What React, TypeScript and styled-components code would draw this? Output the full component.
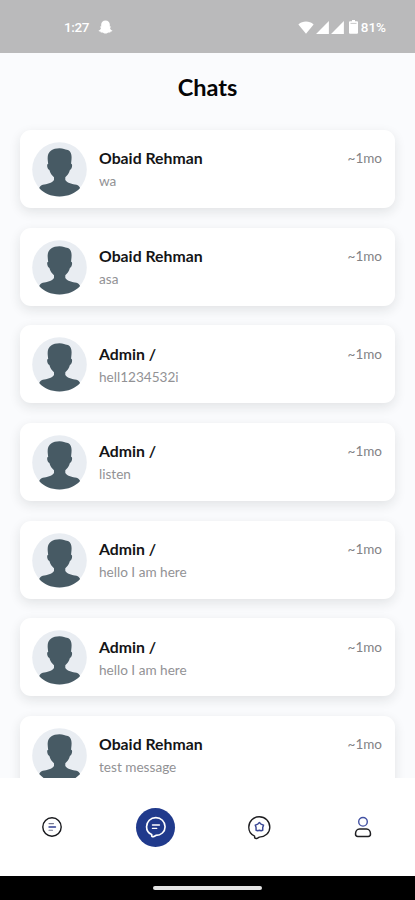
import React from "react";
import styled, { createGlobalStyle } from "styled-components";

const GlobalStyle = createGlobalStyle`
  * { box-sizing: border-box; }
  body { margin: 0; background: #fafbfd; font-family: Lato, "Open Sans", sans-serif; }
`;

const Screen = styled.div`
  width: 415px;
  height: 900px;
  display: flex;
  flex-direction: column;
  overflow: hidden;
  background: #fafbfd;
`;

const StatusBar = styled.header`
  flex: none;
  height: 53px;
  padding: 1px 29px 0 64px;
  display: flex;
  align-items: center;
  justify-content: space-between;
  background: #bababb;
  color: #fff;
  font: 500 13.5px/16px Roboto, sans-serif;
`;

const StatusGroup = styled.div<{ $gap: number }>`
  display: flex;
  align-items: center;
  gap: ${({ $gap }) => $gap}px;
  svg { display: block; }
`;

const Clock = styled.span`
  letter-spacing: -0.4px;
`;

const Title = styled.h1`
  flex: none;
  height: 77px;
  margin: 0;
  padding-top: 19.5px;
  text-align: center;
  font-size: 23.5px;
  line-height: 28px;
  font-weight: 700;
  color: #050506;
`;

const ChatList = styled.main`
  flex: 1;
  min-height: 0;
  display: flex;
  flex-direction: column;
  gap: 19.67px;
  padding: 20px 20px 0;
  margin-top: -20px;
  overflow: hidden;
`;

const ChatCard = styled.article`
  flex: none;
  height: 78px;
  display: flex;
  align-items: flex-start;
  padding: 12px 13px 0 12px;
  border-radius: 11px;
  background: #fff;
  box-shadow: 0 4px 12px rgba(30, 35, 40, 0.11);
`;

const ChatText = styled.div`
  flex: 1;
  padding: 6.45px 0 0 12px;
`;

const Name = styled.div`
  font-size: 15.8px;
  line-height: 20px;
  font-weight: 700;
  color: #141416;
`;

const Message = styled.div`
  margin-top: 4px;
  font-size: 13.6px;
  line-height: 18px;
  color: #929295;
`;

const Age = styled.time`
  padding-top: 7.45px;
  font-size: 13.5px;
  line-height: 18px;
  color: #838386;
`;

const TabBar = styled.nav`
  flex: none;
  height: 98px;
  display: grid;
  grid-template-columns: repeat(4, 1fr);
  justify-items: center;
  align-items: center;
  background: #fff;
  svg { display: block; }
`;

const Tab = styled.button<{ $active?: boolean }>`
  width: 39px;
  height: 39px;
  padding: 0;
  border: 0;
  border-radius: 50%;
  display: grid;
  place-items: center;
  background: ${({ $active }) => ($active ? "#203a8c" : "transparent")};
`;

const SystemBar = styled.footer`
  flex: none;
  height: 24px;
  display: flex;
  justify-content: center;
  align-items: center;
  background: #000;
`;

const HomeHandle = styled.div`
  width: 109px;
  height: 4px;
  border-radius: 2px;
  background: #e4e4e4;
`;

const Ghost = () => (
  <svg width="15" height="14" viewBox="0 0 15 14" fill="#fff">
    <path d="M7.500.4c2.700 0 4.300 1.700 4.300 4v2.100l1 .1c.4.4-.2 1-.8 1.300.5 1.400 1.200 2.100 2.300 2.500.3.6-.7 1-1.700 1.200l-.4.9-1.600-.1c-1.100.2-1.800 1.200-3.100 1.200s-2-1-3.100-1.200l-1.600.1-.4-.9C1.400 11.400.4 11 .7 10.400c1.100-.4 1.800-1.100 2.300-2.500C2.400 7.600 1.800 7 2.200 6.600l1-.1V4.400c0-2.300 1.600-4 4.300-4Z" />
  </svg>
);

const Wifi = () => (
  <svg width="16" height="13" viewBox="0 0 16 13" fill="#fff">
    <path d="M.4 3.400C4.700-.4 11.300-.4 15.600 3.400L8 12.700Z" />
  </svg>
);

const Signal = () => (
  <svg width="13" height="13" viewBox="0 0 13 13" fill="#fff">
    <path d="M.1 12.900 12.900.1v12.800Z" />
  </svg>
);

const Battery = () => (
  <svg width="9" height="14" viewBox="0 0 9 14" fill="#fff">
    <path d="M3 0h3v1.300h2q1 0 1 1v10.500q0 1-1 1H1q-1 0-1-1V2.300q0-1 1-1h2Z" />
    <path d="M1.500 3.400h6" stroke="#bababb" strokeWidth=".8" />
  </svg>
);

const Avatar = () => (
  <svg width="55" height="55" viewBox="0 0 55 55">
    <circle cx="27.500" cy="27.500" r="27.300" fill="#e9edf2" />
    <path
      fill="#475a64"
      d="M27.500 6.300c3.700 0 5.900 1.500 7.200 1.500 3.400.6 4.900 3.300 4.900 7.500 0 2.600-.4 4.600-.5 6.500 1.900 0 .9 5.700-1.200 6.200-.8 3.200-2.600 5.600-4.600 7.200v2.800c1.800 3 7.200 4.100 11.200 4.800 1.800.3 2.900 1.700 3.600 3.300C43.200 51.400 36 54.500 27.500 54.500S11.800 51.400 7.200 46.100c.7-1.600 1.800-3 3.600-3.300 4-.7 9.400-1.800 11.200-4.800v-2.800c-2-1.600-3.800-4-4.600-7.200-2.100-.5-3.100-6.200-1.200-6.200-.2-2-.7-4.200-.5-6.700.3-5.700 5-8.800 11.800-8.800Z"
    />
  </svg>
);

const FeedIcon = () => (
  <svg width="22" height="22" viewBox="0 0 22 22" fill="none" strokeLinecap="round">
    <circle cx="11" cy="11" r="9.200" stroke="#17181c" strokeWidth="1.400" />
    <path d="M8 7.600h4.500M8 14.200h3.500" stroke="#777b91" strokeWidth="1.100" />
    <path d="M8 11h6.500" stroke="#303f91" strokeWidth="1.400" />
  </svg>
);

const bubble =
  "M7.300 20.200C3.700 18.700 1.700 15.500 1.700 11.700 1.700 6.100 6.200 1.700 11.800 1.700s10.100 4.400 10.100 10-4.500 9.500-10.100 9.500l-2 1.200q-1.500.5-2.500-.5Z";

const ChatIcon = () => (
  <svg width="22" height="22" viewBox="0 0 24 24" fill="none" stroke="#fff" strokeLinecap="round">
    <path d={bubble} strokeWidth="1.800" strokeLinejoin="round" />
    <path d="M8.200 9.700h7.500M8.200 13.500h4.500" strokeWidth="1.600" />
  </svg>
);

const ExploreIcon = () => (
  <svg width="25" height="25" viewBox="0 0 24 24" fill="none" strokeLinejoin="round">
    <path d={bubble} stroke="#1d1d20" strokeWidth="1.300" />
    <path
      d="m11.900 7.200 1.500 1.500 2.500 1-.8 2.400v2.500l-1.600.5-1.600-.5-1.600.5-1.600-.5v-2.500l-.8-2.400 2.500-1Z"
      stroke="#3b4996"
      strokeWidth="1.400"
    />
  </svg>
);

const ProfileIcon = () => (
  <svg width="18" height="22" viewBox="0 0 18 22" fill="none">
    <circle cx="9" cy="5.800" r="4.300" stroke="#4251a3" strokeWidth="1.400" />
    <path
      d="M5.500 13h7c2.300 0 4 2.200 4 5 0 1.500-.8 2.400-2.300 2.400H3.800c-1.500 0-2.300-.9-2.300-2.400 0-2.800 1.700-5 4-5Z"
      stroke="#202023"
      strokeWidth="1.500"
    />
  </svg>
);

const chats = [
  ["Obaid Rehman", "wa"],
  ["Obaid Rehman", "asa"],
  ["Admin /", "hell1234532i"],
  ["Admin /", "listen"],
  ["Admin /", "hello I am here"],
  ["Admin /", "hello I am here"],
  ["Obaid Rehman", "test message"],
];

export default function App() {
  return (
    <>
      <GlobalStyle />
      <Screen>
        <StatusBar>
          <StatusGroup $gap={9}>
            <Clock>1:27</Clock>
            <Ghost />
          </StatusGroup>
          <StatusGroup $gap={2}>
            <Wifi />
            <Signal />
            <Signal />
            <StatusGroup $gap={3}>
              <span />
              <Battery />
              <span>81%</span>
            </StatusGroup>
          </StatusGroup>
        </StatusBar>
        <Title>Chats</Title>
        <ChatList>
          {chats.map(([name, message], i) => (
            <ChatCard key={i}>
              <Avatar />
              <ChatText>
                <Name>{name}</Name>
                <Message>{message}</Message>
              </ChatText>
              <Age>~1mo</Age>
            </ChatCard>
          ))}
        </ChatList>
        <TabBar>
          <Tab aria-label="Feed"><FeedIcon /></Tab>
          <Tab aria-label="Chats" $active><ChatIcon /></Tab>
          <Tab aria-label="Explore"><ExploreIcon /></Tab>
          <Tab aria-label="Profile"><ProfileIcon /></Tab>
        </TabBar>
        <SystemBar><HomeHandle /></SystemBar>
      </Screen>
    </>
  );
}
